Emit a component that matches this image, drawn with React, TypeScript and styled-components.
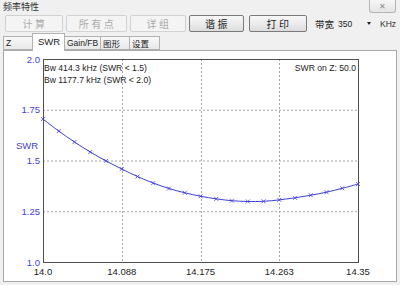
import React from "react"
import styled, { createGlobalStyle } from "styled-components"

const GlobalStyle = createGlobalStyle`
  html, body {
    margin: 0;
    padding: 0;
    background: #f0f0f0;
  }
  body {
    font-family: "Liberation Sans", "Noto Sans CJK SC", sans-serif;
  }
`

const Window = styled.div`
  width: 400px;
  height: 285px;
  overflow: hidden;
  display: flex;
  flex-direction: column;
  background: #f0f0f0;
`

const TitleBar = styled.div`
  height: 14px;
  flex: none;
  display: flex;
  justify-content: space-between;
  align-items: flex-start;
  padding-left: 3px;
`

const Title = styled.span`
  font-family: "Noto Sans CJK SC", sans-serif;
  font-size: 9px;
  line-height: 13px;
  color: #333;
`

const CloseBox = styled.div`
  width: 25px;
  height: 12px;
  margin-right: 4px;
  border: 1px solid #b4b4b4;
  border-top: none;
  border-radius: 0 0 3px 3px;
  background: linear-gradient(#f6f6f6, #e4e4e4);
  display: flex;
  align-items: center;
  justify-content: center;
  font-size: 8px;
  color: #8a8a8a;
`

const Toolbar = styled.div`
  height: 17px;
  flex: none;
  margin-top: 1px;
  padding-left: 5px;
  display: flex;
  align-items: center;
`

const ToolButton = styled.div<{ $w: number; $gap: number; $disabled?: boolean }>`
  width: ${p => p.$w}px;
  height: 17px;
  margin-right: ${p => p.$gap}px;
  box-sizing: border-box;
  display: flex;
  align-items: center;
  justify-content: center;
  padding-left: 2px;
  font-family: "Noto Sans CJK SC", sans-serif;
  font-size: 10px;
  letter-spacing: 2.5px;
  border-radius: 2px;
  color: ${p => (p.$disabled ? "#ababab" : "#1e1e1e")};
  border: 1px solid ${p => (p.$disabled ? "#d2d2d2" : "#7a7a7a")};
  background: ${p =>
    p.$disabled ? "#f4f4f4" : "linear-gradient(#f7f7f7, #ececec 50%, #dcdcdc)"};
`

const FieldLabel = styled.span`
  font-family: "Noto Sans CJK SC", sans-serif;
  font-size: 9.5px;
  color: #222;
  margin-left: 2px;
`

const Select = styled.div`
  width: 40px;
  height: 14px;
  margin-left: 1px;
  display: flex;
  align-items: center;
  justify-content: space-between;
  padding: 0 4px 0 3px;
  box-sizing: border-box;
  font-size: 8.5px;
  color: #222;
`

const Arrow = styled.span`
  width: 0;
  height: 0;
  border-left: 2px solid transparent;
  border-right: 2px solid transparent;
  border-top: 3px solid #222;
`

const Unit = styled.span`
  font-size: 8.5px;
  color: #333;
  margin-left: 5px;
`

const TabStrip = styled.div`
  height: 17px;
  flex: none;
  margin-top: 1px;
  padding-left: 4px;
  display: flex;
  align-items: flex-end;
  position: relative;
  z-index: 1;
`

const Tab = styled.div<{ $w: number; $active?: boolean }>`
  width: ${p => p.$w}px;
  height: ${p => (p.$active ? 18 : 14)}px;
  margin-bottom: ${p => (p.$active ? -1 : 0)}px;
  margin-left: -1px;
  box-sizing: border-box;
  border: 1px solid #b2b2b2;
  border-bottom: ${p => (p.$active ? "none" : "1px solid #b2b2b2")};
  background: ${p => (p.$active ? "#ffffff" : "linear-gradient(#f8f8f8, #e8e8e8)")};
  display: flex;
  align-items: center;
  padding-left: ${p => (p.$active ? 5 : 2)}px;
  padding-bottom: ${p => (p.$active ? 3 : 0)}px;
  white-space: nowrap;
  overflow: hidden;
  font-family: "Liberation Sans", "Noto Sans CJK SC", sans-serif;
  font-size: ${p => (p.$active ? 9.5 : 8.5)}px;
  color: #222;
`

const Panel = styled.div`
  height: 232px;
  flex: none;
  margin: 0 3px 0 3px;
  border: 1px solid #a8a8a8;
  background: #ffffff;
  box-sizing: border-box;
`

// chart geometry in page coordinates
const X0 = 43
const X1 = 358
const Y0 = 262 // swr 1.0
const Y1 = 59 // swr 2.0
const fx = (f: number) => X0 + ((f - 14.0) / 0.35) * (X1 - X0)
const fy = (s: number) => Y0 - (s - 1.0) * (Y0 - Y1)

const swr = [
  1.704, 1.645, 1.591, 1.542, 1.498, 1.458, 1.421, 1.389, 1.362, 1.341, 1.324,
  1.311, 1.302, 1.298, 1.299, 1.306, 1.316, 1.329, 1.344, 1.363, 1.384,
]

const pts = swr.map((s, i) => [fx(14.0 + i * 0.0175), fy(s)])

const smoothPath = (p: number[][]) => {
  let d = `M${p[0][0]},${p[0][1]}`
  for (let i = 0; i < p.length - 1; i++) {
    const a = p[i - 1] || p[i]
    const b = p[i]
    const c = p[i + 1]
    const e = p[i + 2] || c
    const c1 = [b[0] + (c[0] - a[0]) / 6, b[1] + (c[1] - a[1]) / 6]
    const c2 = [c[0] - (e[0] - b[0]) / 6, c[1] - (e[1] - b[1]) / 6]
    d += ` C${c1[0]},${c1[1]} ${c2[0]},${c2[1]} ${c[0]},${c[1]}`
  }
  return d
}

const blue = "#3f3fdc"
const grid = "#a6a6a6"

const yTicks = [
  { v: 2.0, t: "2.0" },
  { v: 1.75, t: "1.75" },
  { v: 1.5, t: "1.5" },
  { v: 1.25, t: "1.25" },
  { v: 1.0, t: "1.0" },
]
const xTicks = [
  { v: 14.0, t: "14.0" },
  { v: 14.0875, t: "14.088" },
  { v: 14.175, t: "14.175" },
  { v: 14.2625, t: "14.263" },
  { v: 14.35, t: "14.35" },
]

const Chart = () => (
  <svg width={392} height={230} viewBox="4 51 392 230" style={{ display: "block" }}>
    <g fontFamily="Liberation Sans, sans-serif">
      {yTicks.slice(1, 4).map(t => (
        <line key={t.t} x1={X0} x2={X1} y1={fy(t.v) + 0.5} y2={fy(t.v) + 0.5}
          stroke={grid} strokeDasharray="2,2" />
      ))}
      {xTicks.slice(1, 4).map(t => (
        <line key={t.t} x1={Math.round(fx(t.v)) + 0.5} x2={Math.round(fx(t.v)) + 0.5}
          y1={Y1} y2={Y0} stroke={grid} strokeDasharray="2,2" />
      ))}
      <rect x={X0 + 0.5} y={Y1 + 0.5} width={X1 - X0} height={Y0 - Y1}
        fill="none" stroke="#505050" />
      {yTicks.map(t => (
        <text key={t.t} x={40} y={fy(t.v) + 3.5} textAnchor="end" fontSize={9.5} fill={blue}>
          {t.t}
        </text>
      ))}
      <text x={27} y={148.5} textAnchor="middle" fontSize={9.5} fill={blue}>SWR</text>
      {xTicks.map(t => (
        <text key={t.t} x={fx(t.v)} y={275} textAnchor="middle" fontSize={9.5} fill="#222">
          {t.t}
        </text>
      ))}
      <text x={44} y={71} fontSize={8.6} fill="#222">Bw 414.3 kHz (SWR &lt; 1.5)</text>
      <text x={44} y={82.5} fontSize={8.6} fill="#222">Bw 1177.7 kHz (SWR &lt; 2.0)</text>
      <text x={356} y={71} textAnchor="end" fontSize={8.6} fill="#222">SWR on Z: 50.0</text>
      <path d={smoothPath(pts)} fill="none" stroke={blue} strokeWidth={1} />
      {pts.map(([x, y], i) => (
        <path key={i} d={`M${x - 2},${y - 2}L${x + 2},${y + 2}M${x - 2},${y + 2}L${x + 2},${y - 2}`}
          stroke={blue} strokeWidth={0.8} />
      ))}
    </g>
  </svg>
)

const buttons = [
  { t: "计算", w: 58, gap: 3, disabled: true },
  { t: "所有点", w: 61, gap: 3, disabled: true },
  { t: "详组", w: 56, gap: 3, disabled: true },
  { t: "谐振", w: 55, gap: 5, disabled: false },
  { t: "打印", w: 58, gap: 6, disabled: false },
]

const tabs = [
  { t: "Z", w: 30 },
  { t: "SWR", w: 33, active: true },
  { t: "Gain/FB", w: 37 },
  { t: "图形", w: 30 },
  { t: "设置", w: 31 },
]

export default function App() {
  return (
    <Window>
      <GlobalStyle />
      <TitleBar>
        <Title>频率特性</Title>
        <CloseBox>✕</CloseBox>
      </TitleBar>
      <Toolbar>
        {buttons.map(b => (
          <ToolButton key={b.t} $w={b.w} $gap={b.gap} $disabled={b.disabled}>
            {b.t}
          </ToolButton>
        ))}
        <FieldLabel>带宽</FieldLabel>
        <Select>
          350
          <Arrow />
        </Select>
        <Unit>KHz</Unit>
      </Toolbar>
      <TabStrip>
        {tabs.map(t => (
          <Tab key={t.t} $w={t.w} $active={t.active}>
            {t.t}
          </Tab>
        ))}
      </TabStrip>
      <Panel>
        <Chart />
      </Panel>
    </Window>
  )
}
